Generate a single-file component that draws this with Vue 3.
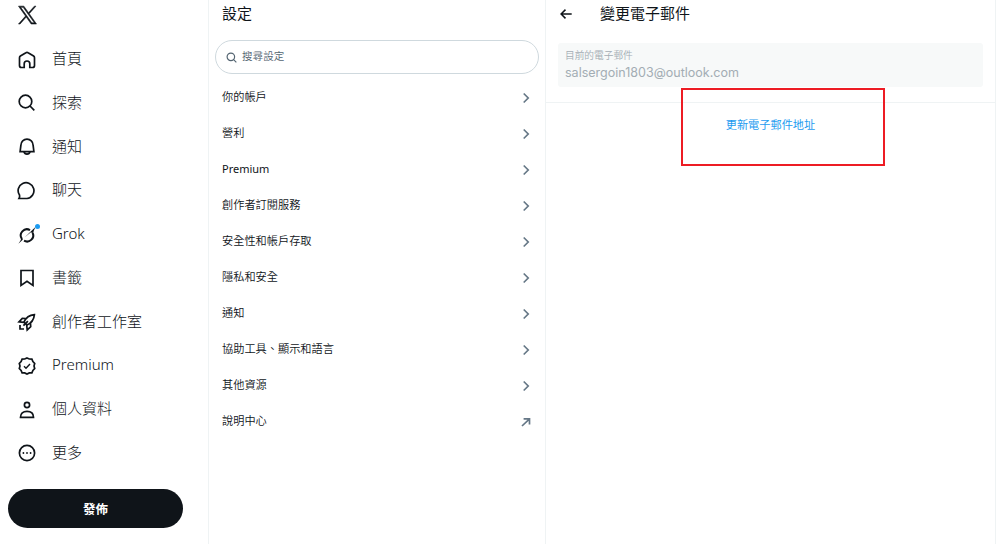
<script setup>
// 左側主選單
const navItems = [
  { label: '首頁', icon: 'home' },
  { label: '探索', icon: 'search' },
  { label: '通知', icon: 'bell' },
  { label: '聊天', icon: 'chat' },
  { label: 'Grok', icon: 'grok', latin: true, dot: true },
  { label: '書籤', icon: 'bookmark' },
  { label: '創作者工作室', icon: 'rocket' },
  { label: 'Premium', icon: 'verified', latin: true },
  { label: '個人資料', icon: 'person' },
  { label: '更多', icon: 'more' }
]

// 設定項目，external 代表另開連結
const settings = [
  { label: '你的帳戶' },
  { label: '營利' },
  { label: 'Premium', latin: true },
  { label: '創作者訂閱服務' },
  { label: '安全性和帳戶存取' },
  { label: '隱私和安全' },
  { label: '通知' },
  { label: '協助工具、顯示和語言' },
  { label: '其他資源' },
  { label: '說明中心', external: true }
]
</script>

<template>
  <div class="page">
    <nav class="sidebar">
      <a class="logo">
        <svg viewBox="0 0 24 24">
          <path fill="currentColor" d="M14.2 10.3 22.7 .8h-2L13.3 9 7.4 .8H.6l8.9 12.6L.6 23.4h2l7.8-8.8 6.2 8.8h6.8zM3.4 2.3h3.1l14.1 19.6h-3.1z" />
        </svg>
      </a>
      <a v-for="item in navItems" :key="item.label" class="nav-item">
        <span class="nav-icon">
          <svg viewBox="0 0 20 20">
            <path v-if="item.icon === 'home'" d="M2.500 7.700c0-.7.3-1.300.9-1.700L8.900 2.700a2 2 0 0 1 2.200 0L16.600 6c.6.4.9 1 .9 1.700v7.800a2 2 0 0 1-2 2h-2.700v-3.700a2.800 2.800 0 0 0-5.600 0v3.700H4.500a2 2 0 0 1-2-2z" />
            <g v-else-if="item.icon === 'search'">
              <circle cx="8.500" cy="8.500" r="6.300" />
              <path d="m13 13 4.300 4.300" />
            </g>
            <g v-else-if="item.icon === 'bell'">
              <path d="M3.900 8.200a6.100 6.100 0 0 1 12.200 0l.8 6.400H3.100z" />
              <path d="M7 14.800a3.100 3.100 0 0 0 6 0" />
            </g>
            <path v-else-if="item.icon === 'chat'" d="M2 17.500c.7-1.300.8-2.100.5-3.400A7.900 7.900 0 1 1 10 17.500z" />
            <g v-else-if="item.icon === 'grok'">
              <path class="ring" d="M13 5.100A6.200 6.200 0 0 0 5 14.200M7 15.700a6.200 6.200 0 0 0 8.700-7.900" />
              <path class="solid" d="M7.500 12.600 18.700 1.800c-1 1.800-1.900 3.300-2.300 5.800l-1.700.7-.5-1.200zM4.200 13.200l1.800 1.300L1.400 18.700c1-1.400 2.500-3.200 2.800-5.500z" />
            </g>
            <path v-else-if="item.icon === 'bookmark'" d="M4 2.500h12v15L10 13.400 4 17.500z" />
            <g v-else-if="item.icon === 'rocket'">
              <path d="M17.400 2.600C12.700 3 9 5.300 7 10.100l2.900 2.900c4.800-2 7.100-5.700 7.500-10.400z" />
              <path d="M8.800 6.500 5.300 6.300 2 9.800l5 .5M13.500 11.200l.2 3.500-3.500 3.300-.5-5M10.900 9.100l-4.500 4.500" />
              <path d="M3 13v4h4" />
            </g>
            <g v-else-if="item.icon === 'verified'">
              <path d="m10 2 2.300 1 2.600.1 1 2.400 1.800 1.900-.7 2.600.7 2.500-1.800 1.900-1 2.400-2.600.1L10 18l-2.300-1.100-2.600-.1-1-2.400-1.800-1.900L3 10l-.7-2.600 1.800-1.900 1-2.400 2.600-.1z" />
              <path class="thin" d="m7 10.200 2 2 4-4.300" />
            </g>
            <g v-else-if="item.icon === 'person'">
              <circle cx="10" cy="5" r="2.600" />
              <path d="M3.500 17.300c0-3.700 2.500-6 6.500-6s6.500 2.300 6.500 6z" />
            </g>
            <g v-else>
              <circle cx="10" cy="10" r="7.600" />
              <path class="dots" d="M6.400 10h.01M10 10h.01M13.600 10h.01" />
            </g>
          </svg>
          <i v-if="item.dot" class="dot"></i>
        </span>
        <span class="nav-label" :class="{ latin: item.latin }">{{ item.label }}</span>
      </a>
      <button class="post-button">發佈</button>
    </nav>

    <section class="settings">
      <h2 class="title">設定</h2>
      <div class="search">
        <svg viewBox="0 0 12 12">
          <circle cx="5.300" cy="5.300" r="4.100" />
          <path d="m8.300 8.300 3 3" />
        </svg>
        <span>搜尋設定</span>
      </div>
      <a v-for="item in settings" :key="item.label" class="setting">
        <span class="setting-label" :class="{ latin: item.latin }">{{ item.label }}</span>
        <svg viewBox="0 0 12 12">
          <path v-if="item.external" d="M2 10 9.300 3.100M3.600 2.900h5.900v5.700" />
          <path v-else d="m3.700 1.500 4.500 4.500-4.500 4.500" />
        </svg>
      </a>
    </section>

    <main class="detail">
      <header class="detail-header">
        <svg viewBox="0 0 12 12">
          <path d="M11.700 6H1.200M5.500 1.600 1.100 6l4.400 4.400" />
        </svg>
        <h2 class="title">變更電子郵件</h2>
      </header>
      <div class="email-wrap">
        <div class="email-field">
          <span class="email-label">目前的電子郵件</span>
          <span class="email-value">salsergoin1803@outlook.com</span>
        </div>
      </div>
      <div class="update">
        <a class="update-link">更新電子郵件地址</a>
        <div class="highlight"></div>
      </div>
    </main>
  </div>
</template>

<style>
body {
  background: #fff;
}
</style>

<style scoped>
.page {
  display: flex;
  width: 1006px;
  height: 544px;
  overflow: hidden;
  color: #0f1419;
  font-family: "Noto Sans CJK TC", sans-serif;
  font-weight: 300;
}

svg {
  display: block;
  flex: none;
  fill: none;
  stroke: currentColor;
}

.sidebar {
  box-sizing: border-box;
  width: 209px;
  flex: none;
  border-right: 1px solid #eff3f4;
}

.logo {
  display: block;
  height: 37px;
  padding: 5px 0 0 18px;
  box-sizing: border-box;
}

.logo svg {
  width: 19px;
  height: 20px;
  stroke-width: 0.7;
}

.nav-item {
  display: flex;
  align-items: center;
  height: 43.75px;
  padding: 1.5px 0 0 17px;
  box-sizing: border-box;
}

.nav-icon {
  position: relative;
  width: 20px;
  height: 20px;
  margin-right: 15px;
}

.nav-icon svg {
  width: 20px;
  height: 20px;
  stroke-width: 1.7;
}

.nav-icon .solid {
  fill: currentColor;
  stroke: none;
}

.nav-icon .ring {
  stroke-width: 2;
}

.nav-icon .thin {
  stroke-width: 1.4;
}

.nav-icon .dots {
  stroke-width: 1.8;
  stroke-linecap: round;
}

.dot {
  position: absolute;
  top: -1px;
  right: -3px;
  width: 5px;
  height: 5px;
  border-radius: 50%;
  background: #1d9bf0;
}

.nav-label {
  font-size: 15px;
  line-height: 20px;
  margin-top: -3px;
}

.post-button {
  display: flex;
  align-items: center;
  justify-content: center;
  width: 175px;
  height: 39px;
  margin: 14.5px 0 0 8px;
  padding: 0;
  border: none;
  border-radius: 20px;
  background: #0f1419;
  color: #fff;
  font-family: inherit;
  font-size: 12.5px;
  font-weight: 700;
}

.settings {
  box-sizing: border-box;
  width: 337px;
  flex: none;
  border-right: 1px solid #eff3f4;
}

.title {
  margin: 0;
  font-size: 15px;
  line-height: 20px;
  font-weight: 400;
}

.settings .title {
  padding: 3px 0 0 13px;
}

.search {
  display: flex;
  align-items: center;
  gap: 5px;
  box-sizing: border-box;
  width: 324px;
  height: 34px;
  margin: 17px 0 6px 6px;
  padding-left: 10px;
  border: 1px solid #cfd9de;
  border-radius: 17px;
  color: #536471;
  font-size: 10.6px;
  font-weight: 350;
}

.search svg {
  width: 11px;
  height: 11px;
  stroke-width: 1.3;
}

.search span {
  line-height: 16px;
  margin-top: -2px;
}

.setting {
  display: flex;
  align-items: center;
  justify-content: space-between;
  height: 36px;
  padding: 0 13px;
}

.setting-label {
  font-size: 11.2px;
  line-height: 16px;
  margin-top: -4px;
  font-weight: 350;
}

.setting svg {
  width: 12px;
  height: 12px;
  color: #657786;
  stroke-width: 1.7;
}

.latin {
  font-family: "Noto Sans", sans-serif;
}

.setting-label.latin {
  margin-top: -2px;
  font-size: 11px;
  font-weight: 400;
}

.detail {
  box-sizing: border-box;
  width: 450px;
  flex: none;
  border-right: 1px solid #eff3f4;
}

.detail-header {
  display: flex;
  align-items: center;
  gap: 28px;
  height: 27px;
  padding-left: 14px;
}

.detail-header svg {
  width: 12px;
  height: 12px;
  stroke-width: 1.5;
}

.detail-header .title {
  margin-top: -1px;
}

.email-wrap {
  box-sizing: border-box;
  height: 76px;
  padding: 16px 12px 0;
  border-bottom: 1px solid #eff3f4;
}

.email-field {
  display: flex;
  flex-direction: column;
  box-sizing: border-box;
  height: 44px;
  padding: 5px 7px 0;
  border-radius: 3px;
  background: #f7f9f9;
  color: #a3adb4;
}

.email-label {
  font-size: 9.7px;
  line-height: 15px;
  font-weight: 350;
}

.email-value {
  font-family: Inter, sans-serif;
  font-size: 12.53px;
  line-height: 20px;
  font-weight: 400;
}

.update {
  position: relative;
  display: flex;
  justify-content: center;
  padding-top: 13px;
}

.update-link {
  color: #1d9bf0;
  font-size: 11.2px;
  line-height: 16px;
  font-weight: 400;
}

/* 紅框標示 */
.highlight {
  position: absolute;
  box-sizing: border-box;
  left: 135px;
  top: -15px;
  width: 204px;
  height: 78px;
  border: 2px solid #ed1c24;
}
</style>
